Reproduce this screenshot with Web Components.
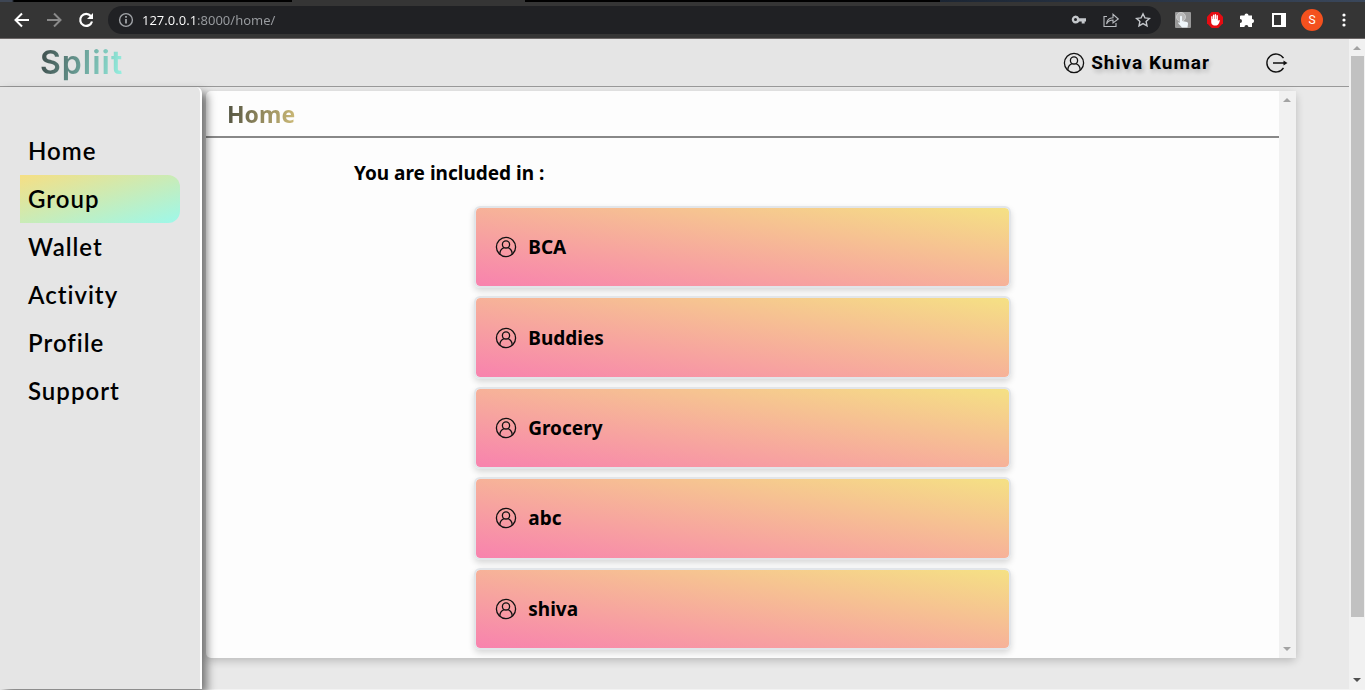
<!DOCTYPE html>
<html lang="en">
<head>
<meta charset="utf-8">
<meta name="viewport" content="width=device-width, initial-scale=1">
<title>Spliit</title>
<style>
html, body { margin: 0; height: 100%; }
body { font-family: "Noto Sans", "Open Sans", sans-serif; color: #000; }
</style>
</head>
<body>
<spliit-window></spliit-window>
<script>
class Base extends HTMLElement {
  constructor() {
    super();
    this.attachShadow({ mode: 'open' }).innerHTML = '<style>*{box-sizing:border-box}button{font:inherit;color:inherit;background:none;border:0;padding:0;cursor:pointer}svg{display:block}</style>' + this.view();
  }
}

const userIcon = `<svg width="22" height="22" viewBox="0 0 22 22" fill="none" stroke="#111" stroke-width="1.3" aria-hidden="true">
  <circle cx="11" cy="11" r="9.6"/><circle cx="11" cy="8.4" r="3.6"/><path d="M4.800 18c.2-3.600 2-5.600 4.400-6.300M17.200 18c-.2-3.600-2-5.600-4.400-6.300"/></svg>`;

customElements.define('browser-bar', class extends Base {
  view() { return `
<style>
:host { display: block; background: #353535; border-bottom: 1px solid #6b6666; }
.tabs { height: 2px; background: linear-gradient(90deg, #3e4654 0 12px, #000 14px 292px, #353535 292px 525px, #000 525px 940px, #1b2533 940px, #3a475b 100%); }
.tools { display: flex; align-items: center; height: 36px; padding: 0 12px; }
.nav { display: flex; gap: 12px; margin-right: 12px; }
.pill { flex: 1; min-width: 0; display: flex; align-items: center; height: 28px; border-radius: 14px; background: #202124; padding: 0 8px; }
.pill input { flex: 1; min-width: 0; margin-left: 6px; border: 0; outline: 0; padding: 0; height: 24px; font: 13px "Noto Sans", sans-serif; color: transparent;
  background: linear-gradient(90deg, #fff 55px, #9a9da1 55px); -webkit-background-clip: text; background-clip: text; }
.marks { display: flex; gap: 12px; }
.ext { display: flex; align-items: center; gap: 12px; margin-left: 12px; }
.avatar { width: 22px; height: 22px; border-radius: 50%; background: #f4511e; color: #fff; font: 12px/22px Roboto, sans-serif; text-align: center; }
.menu { width: 18px; }
</style>
<div class="tabs"></div>
<div class="tools">
  <div class="nav">
    <button aria-label="Back"><svg width="20" height="20" fill="none" stroke="#fff" stroke-width="2"><path d="M17 10H4M10 3.500L3.500 10l6.500 6.500"/></svg></button>
    <button aria-label="Forward"><svg width="20" height="20" fill="none" stroke="#8a8a8a" stroke-width="2"><path d="M3 10h13M10 3.500l6.500 6.500-6.500 6.500"/></svg></button>
    <button aria-label="Reload"><svg width="20" height="20" fill="none" stroke="#fff" stroke-width="2.200"><path d="M14.800 6A6 6 0 1 0 16 11.500"/><path d="M17 3v6h-6z" fill="#fff" stroke="none"/></svg></button>
  </div>
  <div class="pill">
    <svg width="20" height="20" fill="none" stroke="#a0a3a7" stroke-width="1.400"><circle cx="10" cy="10" r="6.400"/><path d="M10 9v4.500M10 6v1.700" stroke-width="1.800"/></svg>
    <input type="text" aria-label="Address" value="127.0.0.1:8000/home/" spellcheck="false">
    <div class="marks">
      <button aria-label="Passwords"><svg width="20" height="20"><path fill="#c4c7cb" fill-rule="evenodd" d="M6.500 5.500a4 4 0 0 1 3.800 2.700H17v3.200h-1.300v2.200h-3v-2.200h-2.400A4 4 0 1 1 6.500 5.500zm0 2.600a1.500 1.500 0 1 0 0 3 1.500 1.500 0 0 0 0-3z"/></svg></button>
      <button aria-label="Share"><svg width="20" height="20" fill="none" stroke="#b9bcc0" stroke-width="1.100"><path d="M6 6.500H3V16.500h12v-3.500M5.500 14c.5-4.500 3-6 6.500-6.200V4.300L17.300 9 12 13v-3c-3 0-5 1-6.500 4z"/></svg></button>
      <button aria-label="Bookmark"><svg width="20" height="20" fill="none" stroke="#c4c7cb" stroke-width="1.400"><path d="M10 3.800l1.900 4.100 4.500.5-3.300 3 .9 4.500-4-2.300-4 2.300.9-4.500-3.300-3 4.500-.5z"/></svg></button>
    </div>
  </div>
  <div class="ext">
    <button aria-label="Pointer extension"><svg width="20" height="20"><rect x="2" y="2" width="16" height="16" rx="1" fill="#999"/><circle cx="8" cy="7" r="4.500" fill="#b9b9b9" stroke="#ccc"/><path d="M7 6.500q1-1.500 2 0V11l5 1q1.300.4 1 2l-.5 3.500H9L5 13q.5-1.500 2-.3z" fill="#eef5fa"/></svg></button>
    <button aria-label="Blocker extension"><svg width="20" height="20"><path d="M6.700 2h6.600L18 6.700v6.600L13.300 18H6.700L2 13.300V6.700z" fill="#e60c12"/><path d="M6.200 9V6.500q.7-.8 1.300 0V9h.4V5q.7-.8 1.400 0v4h.4V4.500q.7-.8 1.400 0V9h.4V5.500q.7-.8 1.400 0V11l1-1q1-.3.900.7-1 4.300-3.300 4.800H9q-2.800-.6-2.800-3.500z" fill="#fff"/></svg></button>
    <button aria-label="Extensions"><svg width="20" height="20" fill="#fff"><path d="M4 5.500h3.500a2 2 0 1 1 4 0H15V9a2 2 0 1 1 0 4.200V17h-3.600a2 2 0 0 0-4 0H3v-4a2 2 0 0 0 0-4V6.500a1 1 0 0 1 1-1z"/></svg></button>
    <button aria-label="Side panel"><svg width="20" height="20"><path fill="#fff" fill-rule="evenodd" d="M3 3h14v14H3zm2 2v10h7V5z"/></svg></button>
    <button class="avatar" aria-label="S profile">S</button>
    <button class="menu" aria-label="Menu"><svg width="18" height="20" fill="#fff"><circle cx="9" cy="5" r="1.600"/><circle cx="9" cy="10" r="1.600"/><circle cx="9" cy="15" r="1.600"/></svg></button>
  </div>
</div>`; }
});

customElements.define('scroll-track', class extends Base {
  view() { return `
<style>
:host { display: flex; flex-direction: column; flex: none; width: var(--track, 17px); background: #f1f1f1; }
svg { flex: none; }
.rail { flex: 1; padding: 0 1px 0 2px; }
.thumb { background: #c1c1c1; height: var(--thumb, 0); }
</style>
<svg width="16" height="17"><path d="M4 11h8L8 7z" fill="#a3a3a3"/></svg>
<div class="rail"><div class="thumb"></div></div>
<svg width="16" height="17"><path d="M4 6h8l-4 4z" fill="var(--tail, #a3a3a3)"/></svg>`; }
});

customElements.define('site-header', class extends Base {
  view() { return `
<style>
:host { display: flex; align-items: center; justify-content: space-between; height: 48px; background: #e5e5e5; border-bottom: 1px solid #999; padding: 0 60px 0 40px; }
.brand { font: 600 32px Inter, sans-serif; letter-spacing: 1px; text-decoration: none; color: transparent; background: linear-gradient(100deg, #3d4a49, #98f5e5); -webkit-background-clip: text; background-clip: text; }
.account { display: flex; align-items: center; gap: 55px; }
.user { display: flex; align-items: center; gap: 6px; font: 700 19px Roboto, sans-serif; letter-spacing: 1px; text-shadow: 2px 3px 4px rgba(0,0,0,.2); color: #000; text-decoration: none; }
</style>
<a class="brand" href="#">Spliit</a>
<div class="account">
  <a class="user" href="#">${userIcon}<span>Shiva Kumar</span></a>
  <button aria-label="Log out"><svg width="24" height="22" fill="none" stroke="#111" stroke-width="1.400"><path d="M18.500 6.200A9 9 0 1 0 18.500 15.800M8 11h11"/><path d="M18.500 8.500L22.500 11l-4 2.500z" fill="#111" stroke="none"/></svg></button>
</div>`; }
});

customElements.define('nav-item', class extends Base {
  view() { return `
<style>
:host { display: block; }
a { display: block; font: 600 24px/48px Lato, sans-serif; letter-spacing: 1px; color: #000; text-decoration: none; padding: 0 8px; border-radius: 0 12px 12px 0; }
:host([active]) a { background: linear-gradient(to bottom right, #f6df84, #9df8ea); }
</style>
<a href="#"><slot></slot></a>`; }
});

customElements.define('side-nav', class extends Base {
  view() { return `
<style>
:host { display: block; flex: none; width: 202px; background: #e5e5e5; border-right: 2px solid #fff; border-radius: 0 6px 0 0; box-shadow: 5px 5px 10px rgba(0,0,0,.5); padding: 40px 20px; box-sizing: border-box; position: relative; z-index: 1; }
</style>
<nav><slot></slot></nav>`; }
});

customElements.define('group-card', class extends Base {
  view() { return `
<style>
:host { display: flex; flex: 1; min-height: 64px; }
button { flex: 1; display: flex; align-items: center; gap: 11px; padding: 0 19px; font: 700 19px "Noto Sans", sans-serif; text-align: left; border: 2px solid #e2e5e9; border-radius: 6px; box-shadow: 0 3px 6px rgba(0,0,0,.15);
  background: linear-gradient(to top right, #f882ae, #f5e184) padding-box; }
</style>
<button>${userIcon}<span><slot></slot></span></button>`; }
});

customElements.define('group-panel', class extends Base {
  view() { return `
<style>
:host { display: flex; flex: 1; min-width: 0; margin: 4px 53px 31px 4px; background: #fdfdfd; border-radius: 5px; box-shadow: 0 3px 8px rgba(0,0,0,.2); }
.body { flex: 1; min-width: 0; display: flex; flex-direction: column; }
header { border-bottom: 2px solid #888; padding: 1px 21px 0; }
h1 { display: inline-block; vertical-align: top; margin: 0; font: 700 23px/44px "Noto Sans", sans-serif; color: transparent; background: linear-gradient(100deg, #4e5040, #d0bd79); -webkit-background-clip: text; background-clip: text; }
h2 { margin: 18px 0 16px 148px; font: 700 19px/34px "Noto Sans", sans-serif; }
.list { flex: 1; display: flex; flex-direction: column; gap: 8px; width: 50%; margin: 0 auto 8px; }
</style>
<div class="body">
  <header><h1>Home</h1></header>
  <h2>You are included in :</h2>
  <div class="list"><slot></slot></div>
</div>
<scroll-track></scroll-track>`; }
});

customElements.define('spliit-window', class extends Base {
  view() { return `
<style>
:host { display: flex; flex-direction: column; min-height: 100vh; }
.page { flex: 1; display: flex; border-bottom: 1px solid #f3f3f3; }
.site { flex: 1; min-width: 0; display: flex; flex-direction: column; background: #e9e9e9; }
.main { flex: 1; display: flex; }
.outer { --track: 16px; --thumb: 91%; --tail: #505050; }
</style>
<browser-bar></browser-bar>
<div class="page">
  <div class="site">
    <site-header></site-header>
    <div class="main">
      <side-nav>
        <nav-item>Home</nav-item><nav-item active>Group</nav-item><nav-item>Wallet</nav-item>
        <nav-item>Activity</nav-item><nav-item>Profile</nav-item><nav-item>Support</nav-item>
      </side-nav>
      <group-panel>
        <group-card>BCA</group-card><group-card>Buddies</group-card><group-card>Grocery</group-card>
        <group-card>abc</group-card><group-card>shiva</group-card>
      </group-panel>
    </div>
  </div>
  <scroll-track class="outer"></scroll-track>
</div>`; }
});
</script>
</body>
</html>
